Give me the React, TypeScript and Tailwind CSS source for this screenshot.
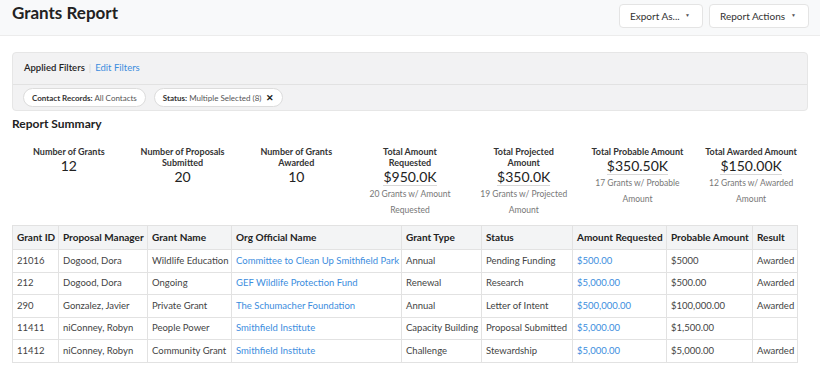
import React from 'react'

const stats = [
  { label: ['Number of Grants'], value: '12' },
  { label: ['Number of Proposals', 'Submitted'], value: '20' },
  { label: ['Number of Grants', 'Awarded'], value: '10' },
  { label: ['Total Amount', 'Requested'], value: '$950.0K', sub: ['20 Grants w/ Amount', 'Requested'] },
  { label: ['Total Projected', 'Amount'], value: '$350.0K', sub: ['19 Grants w/ Projected', 'Amount'] },
  { label: ['Total Probable Amount'], value: '$350.50K', sub: ['17 Grants w/ Probable', 'Amount'] },
  { label: ['Total Awarded Amount'], value: '$150.00K', sub: ['12 Grants w/ Awarded', 'Amount'] },
]

const columns = [
  { name: 'Grant ID', w: 'w-[46px]' },
  { name: 'Proposal Manager', w: 'w-[89px]' },
  { name: 'Grant Name', w: 'w-[84px]' },
  { name: 'Org Official Name', w: 'w-[170px]' },
  { name: 'Grant Type', w: 'w-[80px]' },
  { name: 'Status', w: 'w-[91px]' },
  { name: 'Amount Requested', w: 'w-[94px]' },
  { name: 'Probable Amount', w: 'w-[86px]' },
  { name: 'Result', w: 'w-[45px]' },
]

const rows = [
  ['21016', 'Dogood, Dora', 'Wildlife Education', 'Committee to Clean Up Smithfield Park', 'Annual', 'Pending Funding', '$500.00', '$5000', 'Awarded'],
  ['212', 'Dogood, Dora', 'Ongoing', 'GEF Wildlife Protection Fund', 'Renewal', 'Research', '$5,000.00', '$500.00', 'Awarded'],
  ['290', 'Gonzalez, Javier', 'Private Grant', 'The Schumacher Foundation', 'Annual', 'Letter of Intent', '$500,000.00', '$100,000.00', 'Awarded'],
  ['11411', 'niConney, Robyn', 'People Power', 'Smithfield Institute', 'Capacity Building', 'Proposal Submitted', '$5,000.00', '$1,500.00', ''],
  ['11412', 'niConney, Robyn', 'Community Grant', 'Smithfield Institute', 'Challenge', 'Stewardship', '$5,000.00', '$5,000.00', 'Awarded'],
]

function DropButton({ label, width }: { label: string; width: string }) {
  return (
    <button className={`${width} h-[24px] pl-[10px] pr-[12px] flex items-center justify-between bg-white border border-[#e4e4e4] rounded text-[10px] text-[#333]`}>
      {label}
      <span className="text-[5px] text-[#555]">▼</span>
    </button>
  )
}

function Chip({ name, value, removable }: { name: string; value: string; removable?: boolean }) {
  return (
    <div className="h-[19px] px-[8px] flex items-center gap-[5px] bg-white border border-[#dcdcdc] rounded-full text-[8px] text-[#555]">
      <span>
        <span className="font-bold text-[#333]">{name}:</span> {value}
      </span>
      {removable && <span className="text-[9px] font-bold text-[#222] leading-none">✕</span>}
    </div>
  )
}

export default function App() {
  return (
    <div className="w-[820px] h-[366px] overflow-hidden bg-white font-['Lato',sans-serif] text-[#333]">
      <div className="h-[36px] flex items-start justify-between bg-[#f8f9fa] border-b border-[#ececec] pl-3 pr-[11px]">
        <h1 className="text-[17px] font-bold text-[#222] leading-[26px]">Grants Report</h1>
        <div className="flex gap-[6px] mt-[4px]">
          <DropButton label="Export As..." width="w-[84px]" />
          <DropButton label="Report Actions" width="w-[100px]" />
        </div>
      </div>

      <div className="px-3">
        <div className="mt-[16px] bg-[#f2f2f3] border border-[#e6e6e6] rounded">
          <div className="h-[31px] flex items-center px-[11px] text-[9.5px]">
            <span className="font-semibold text-[#222]">Applied Filters</span>
            <span className="mx-[4px] text-[#d5d5d5]">|</span>
            <span className="text-[#3c8dde]">Edit Filters</span>
          </div>
          <div className="h-[26px] flex items-center gap-[8px] px-[10px] border-t border-[#e2e2e2]">
            <Chip name="Contact Records" value="All Contacts" />
            <Chip name="Status" value="Multiple Selected (8)" removable />
          </div>
        </div>

        <h2 className="mt-[5px] text-[12px] font-bold text-[#222] leading-[16px]">Report Summary</h2>

        <div className="grid grid-cols-7 mt-[14px]">
          {stats.map((s) => (
            <div key={s.value} className="flex flex-col items-center text-center">
              <div className="text-[9px] font-bold text-[#333] leading-[11px] whitespace-nowrap">
                {s.label.map((l) => (
                  <div key={l}>{l}</div>
                ))}
              </div>
              <div className={`text-[14px] text-[#222] leading-[17px] ${s.sub ? 'border-b border-[#d8d8d8]' : ''}`}>{s.value}</div>
              {s.sub && (
                <div className="text-[8.5px] text-[#777] leading-[16px] whitespace-nowrap">
                  {s.sub.map((l) => (
                    <div key={l}>{l}</div>
                  ))}
                </div>
              )}
            </div>
          ))}
        </div>

        <table className="mt-[7px] w-[786px] border-collapse text-[9.5px] table-fixed">
          <thead>
            <tr className="bg-[#f3f4f5] h-[24px]">
              {columns.map((c) => (
                <th key={c.name} className={`${c.w} border border-[#e2e2e2] px-[4px] text-left text-[10px] font-bold text-[#222] whitespace-nowrap`}>
                  {c.name}
                </th>
              ))}
            </tr>
          </thead>
          <tbody>
            {rows.map((r) => (
              <tr key={r[0]} className="h-[22.6px]">
                {r.map((cell, i) => (
                  <td
                    key={i}
                    className={`border border-[#e2e2e2] px-[4px] whitespace-nowrap overflow-hidden ${i === 3 || i === 6 ? 'text-[#3c8dde]' : 'text-[#444]'}`}
                  >
                    {cell}
                  </td>
                ))}
              </tr>
            ))}
          </tbody>
        </table>
      </div>
    </div>
  )
}
